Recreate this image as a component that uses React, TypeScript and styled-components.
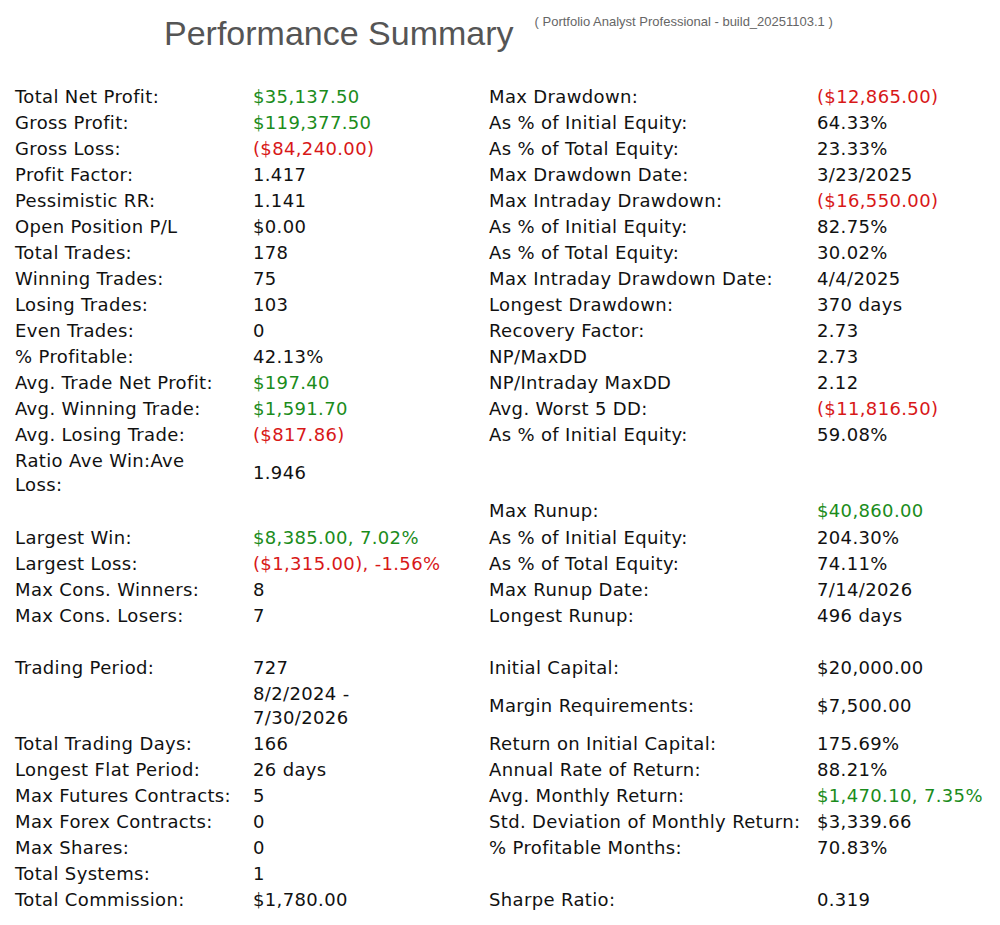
import React from "react";
import styled, { createGlobalStyle } from "styled-components";

const GlobalStyle = createGlobalStyle`
  html, body {
    margin: 0;
    padding: 0;
    background: #ffffff;
  }
  body {
    font-family: "DejaVu Sans", Verdana, sans-serif;
  }
`;

type Tone = "plain" | "pos" | "neg";

type Cell = { text?: React.ReactNode; tone?: Tone };
type Row = [Cell, Cell, Cell, Cell];

const Page = styled.div`
  width: 1000px;
  padding: 0 0 0 15px;
  box-sizing: border-box;
`;

const Header = styled.header`
  display: flex;
  align-items: flex-start;
  gap: 21px;
  height: 83.5px;
  box-sizing: border-box;
  padding: 15px 0 0 149px;
`;

const Title = styled.h1`
  margin: 1px 0 0 0;
  font-family: "Liberation Sans", Arial, sans-serif;
  font-weight: normal;
  font-size: 34px;
  line-height: 34px;
  color: #555555;
  white-space: nowrap;
`;

const Build = styled.span`
  font-family: "Liberation Sans", Arial, sans-serif;
  font-size: 13px;
  line-height: 13px;
  color: #666666;
  white-space: nowrap;
`;

const Table = styled.div`
  display: grid;
  grid-template-columns: 238px 236px 328px 1fr;
  grid-auto-rows: minmax(26.07px, auto);
  align-items: center;
`;

const toneColor: Record<Tone, string> = {
  plain: "#111111",
  pos: "#1b8c1b",
  neg: "#d81818",
};

const CellBox = styled.div<{ $tone: Tone }>`
  padding: 1.04px 0;
  font-size: 18px;
  line-height: 24px;
  letter-spacing: 0.35px;
  color: ${(p) => toneColor[p.$tone]};
  white-space: nowrap;
`;

const L = (text: React.ReactNode): Cell => ({ text, tone: "plain" });
const V = (text: React.ReactNode, tone: Tone = "plain"): Cell => ({ text, tone });
const E: Cell = {};

const rows: Row[] = [
  [L("Total Net Profit:"), V("$35,137.50", "pos"), L("Max Drawdown:"), V("($12,865.00)", "neg")],
  [L("Gross Profit:"), V("$119,377.50", "pos"), L("As % of Initial Equity:"), V("64.33%")],
  [L("Gross Loss:"), V("($84,240.00)", "neg"), L("As % of Total Equity:"), V("23.33%")],
  [L("Profit Factor:"), V("1.417"), L("Max Drawdown Date:"), V("3/23/2025")],
  [L("Pessimistic RR:"), V("1.141"), L("Max Intraday Drawdown:"), V("($16,550.00)", "neg")],
  [L("Open Position P/L"), V("$0.00"), L("As % of Initial Equity:"), V("82.75%")],
  [L("Total Trades:"), V("178"), L("As % of Total Equity:"), V("30.02%")],
  [L("Winning Trades:"), V("75"), L("Max Intraday Drawdown Date:"), V("4/4/2025")],
  [L("Losing Trades:"), V("103"), L("Longest Drawdown:"), V("370 days")],
  [L("Even Trades:"), V("0"), L("Recovery Factor:"), V("2.73")],
  [L("% Profitable:"), V("42.13%"), L("NP/MaxDD"), V("2.73")],
  [L("Avg. Trade Net Profit:"), V("$197.40", "pos"), L("NP/Intraday MaxDD"), V("2.12")],
  [L("Avg. Winning Trade:"), V("$1,591.70", "pos"), L("Avg. Worst 5 DD:"), V("($11,816.50)", "neg")],
  [L("Avg. Losing Trade:"), V("($817.86)", "neg"), L("As % of Initial Equity:"), V("59.08%")],
  [
    L(
      <>
        Ratio Ave Win:Ave
        <br />
        Loss:
      </>
    ),
    V("1.946"),
    E,
    E,
  ],
  [E, E, L("Max Runup:"), V("$40,860.00", "pos")],
  [L("Largest Win:"), V("$8,385.00, 7.02%", "pos"), L("As % of Initial Equity:"), V("204.30%")],
  [L("Largest Loss:"), V("($1,315.00), -1.56%", "neg"), L("As % of Total Equity:"), V("74.11%")],
  [L("Max Cons. Winners:"), V("8"), L("Max Runup Date:"), V("7/14/2026")],
  [L("Max Cons. Losers:"), V("7"), L("Longest Runup:"), V("496 days")],
  [E, E, E, E],
  [L("Trading Period:"), V("727"), L("Initial Capital:"), V("$20,000.00")],
  [
    E,
    V(
      <>
        8/2/2024 -
        <br />
        7/30/2026
      </>
    ),
    L("Margin Requirements:"),
    V("$7,500.00"),
  ],
  [L("Total Trading Days:"), V("166"), L("Return on Initial Capital:"), V("175.69%")],
  [L("Longest Flat Period:"), V("26 days"), L("Annual Rate of Return:"), V("88.21%")],
  [L("Max Futures Contracts:"), V("5"), L("Avg. Monthly Return:"), V("$1,470.10, 7.35%", "pos")],
  [L("Max Forex Contracts:"), V("0"), L("Std. Deviation of Monthly Return:"), V("$3,339.66")],
  [L("Max Shares:"), V("0"), L("% Profitable Months:"), V("70.83%")],
  [L("Total Systems:"), V("1"), E, E],
  [L("Total Commission:"), V("$1,780.00"), L("Sharpe Ratio:"), V("0.319")],
];

export default function App() {
  return (
    <>
      <GlobalStyle />
      <Page>
        <Header>
          <Title>Performance Summary</Title>
          <Build>( Portfolio Analyst Professional - build_20251103.1 )</Build>
        </Header>
        <Table>
          {rows.map((row, ri) =>
            row.map((cell, ci) => (
              <CellBox key={`${ri}-${ci}`} $tone={cell.tone ?? "plain"}>
                {cell.text ?? "\u00a0"}
              </CellBox>
            ))
          )}
        </Table>
      </Page>
    </>
  );
}
